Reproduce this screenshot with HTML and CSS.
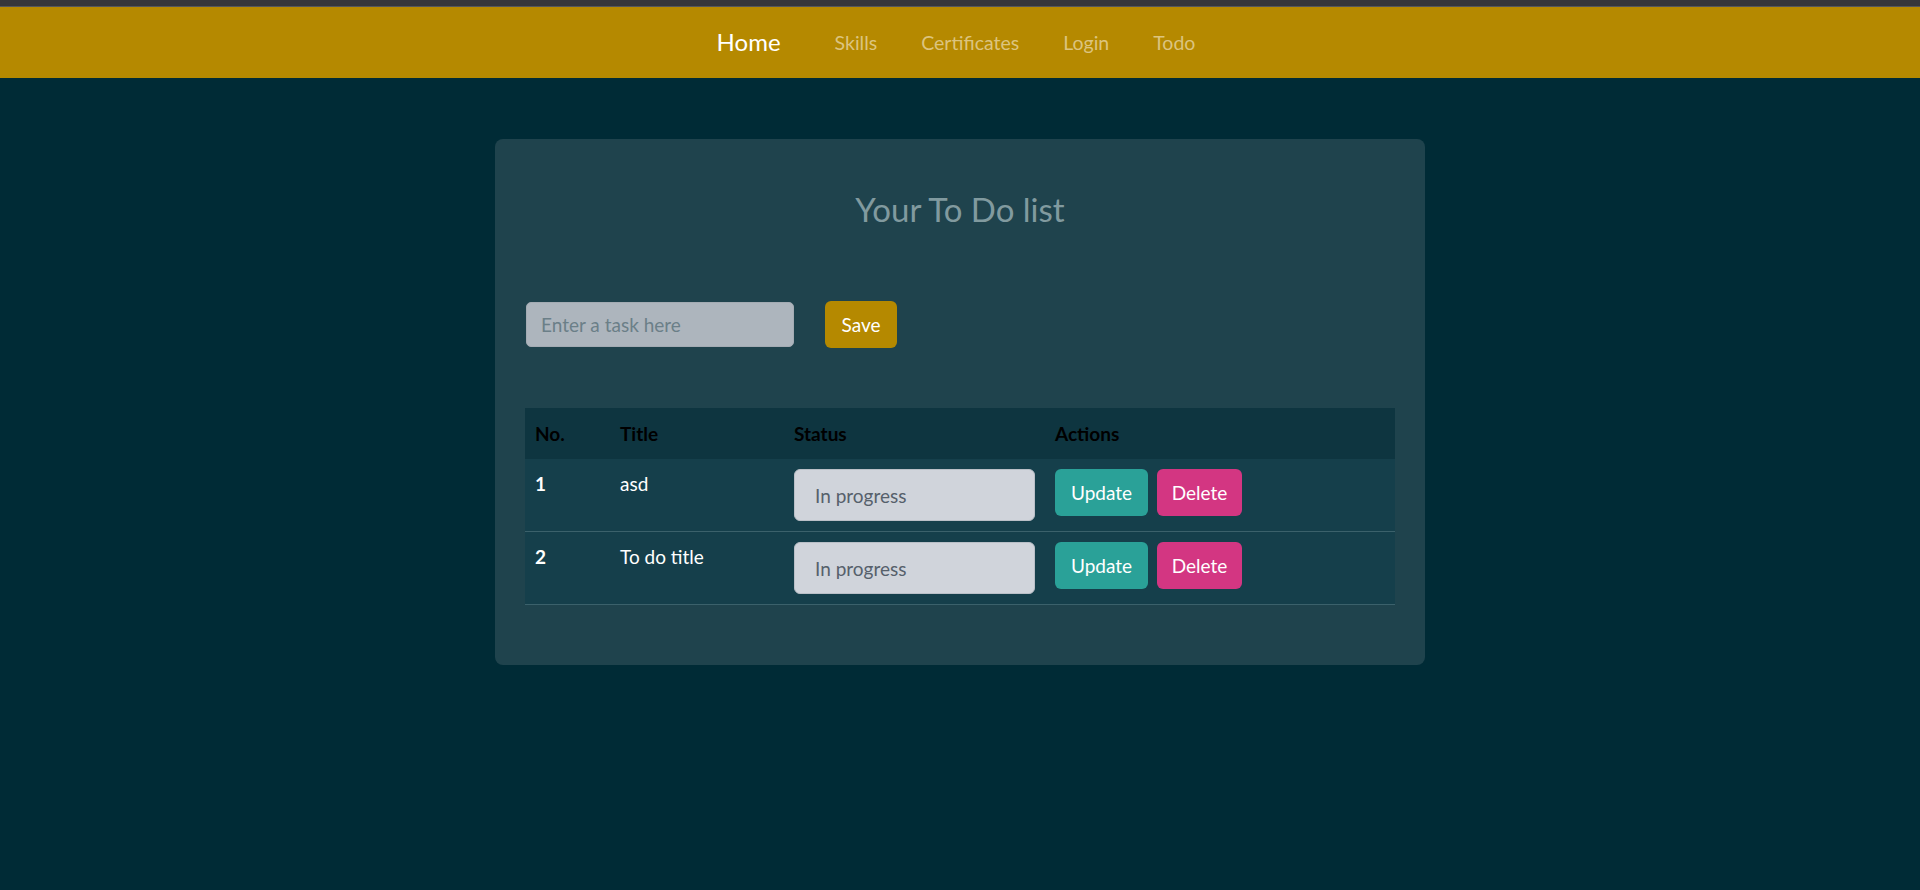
FILE: index.html
```html
<!DOCTYPE html>
<html lang="en">
<head>
<meta charset="utf-8">
<title>Todo</title>
<link rel="stylesheet" href="styles.css">
</head>
<body>
<div class="topstrip"></div>
<nav class="navbar">
  <a class="nav-brand" href="#">Home</a>
  <a class="nav-link" href="#">Skills</a>
  <a class="nav-link" href="#">Certificates</a>
  <a class="nav-link" href="#">Login</a>
  <a class="nav-link" href="#">Todo</a>
</nav>
<main class="main">
  <section class="card">
    <h2 class="card-title">Your To Do list</h2>
    <form class="task-form">
      <input class="task-input" type="text" placeholder="Enter a task here">
      <button class="btn btn-save" type="button">Save</button>
    </form>
    <table class="todo-table">
      <colgroup>
        <col class="col-no">
        <col class="col-title">
        <col class="col-status">
        <col class="col-actions">
      </colgroup>
      <thead>
        <tr><th>No.</th><th>Title</th><th>Status</th><th>Actions</th></tr>
      </thead>
      <tbody>
        <tr>
          <td class="num">1</td>
          <td>asd</td>
          <td><select class="status-select"><option>In progress</option></select></td>
          <td><div class="actions"><button class="btn btn-update" type="button">Update</button><button class="btn btn-delete" type="button">Delete</button></div></td>
        </tr>
        <tr>
          <td class="num">2</td>
          <td>To do title</td>
          <td><select class="status-select"><option>In progress</option></select></td>
          <td><div class="actions"><button class="btn btn-update" type="button">Update</button><button class="btn btn-delete" type="button">Delete</button></div></td>
        </tr>
      </tbody>
    </table>
  </section>
</main>
</body>
</html>
```

FILE: styles.css
```css
* { box-sizing: border-box; }

html, body {
  margin: 0;
  padding: 0;
}

body {
  background: #002b36;
  font-family: "Lato", "Open Sans", sans-serif;
  min-height: 890px;
}

.topstrip {
  height: 7px;
  background: #35363a;
  border-bottom: 1px solid #55575b;
}

.navbar {
  height: 71px;
  background: #b58900;
  display: flex;
  align-items: center;
  justify-content: center;
  padding-right: 8px;
}

.nav-brand {
  color: #ffffff;
  text-decoration: none;
  font-size: 24px;
  margin-right: 32px;
  padding-bottom: 2px;
}

.nav-link {
  color: #dcc47f;
  text-decoration: none;
  font-size: 19.5px;
  padding: 0 22px;
}

.nav-link:last-child {
  padding-right: 0;
}

.main {
  padding-top: 61px;
}

.card {
  width: 930px;
  margin: 0 auto;
  background: #1f434d;
  border-radius: 8px;
  padding: 30px 30px 60px;
}

.card-title {
  margin: 20px 0 0;
  text-align: center;
  font-weight: 400;
  font-size: 33px;
  line-height: 40px;
  color: #819a9f;
}

.task-form {
  margin: 72px 0 0;
  display: flex;
  align-items: center;
  gap: 31px;
  padding-left: 1px;
}

.task-input {
  width: 268px;
  height: 45px;
  border: 1px solid #a3abb3;
  border-radius: 5px;
  background: #adb5bd;
  padding: 0 14px;
  font-family: inherit;
  font-size: 19px;
  color: #3d4a52;
}

.task-input::placeholder {
  color: #6b7f88;
}

.btn {
  border: none;
  border-radius: 6px;
  color: #ffffff;
  font-family: inherit;
  font-size: 19px;
  height: 47px;
  cursor: pointer;
}

.btn-save {
  width: 72px;
  background: #b58900;
}

.todo-table {
  margin-top: 60px;
  width: 870px;
  border-collapse: collapse;
  table-layout: fixed;
}

.col-no { width: 85px; }
.col-title { width: 174px; }
.col-status { width: 261px; }
.col-actions { width: 350px; }

.todo-table th {
  background: #0e3540;
  color: #000000;
  text-align: left;
  font-weight: 700;
  font-size: 19px;
  line-height: 30px;
  padding: 11px 10px 10px;
}

.todo-table td {
  background: #153f4b;
  color: #ffffff;
  font-size: 19px;
  line-height: 30px;
  padding: 10px 10px;
  vertical-align: top;
  border-bottom: 1px solid #3b616b;
}

.todo-table td.num {
  font-weight: 700;
}

.status-select {
  appearance: none;
  -webkit-appearance: none;
  width: 241px;
  height: 52px;
  border: 1px solid #b9bfc7;
  border-radius: 6px;
  background: #d0d4db;
  color: #56606b;
  font-family: inherit;
  font-size: 19px;
  padding: 0 20px;
  display: block;
}

.actions {
  display: flex;
  gap: 9px;
}

.btn-update {
  width: 93px;
  background: #2aa198;
}

.btn-delete {
  width: 85px;
  background: #d33682;
}
```
